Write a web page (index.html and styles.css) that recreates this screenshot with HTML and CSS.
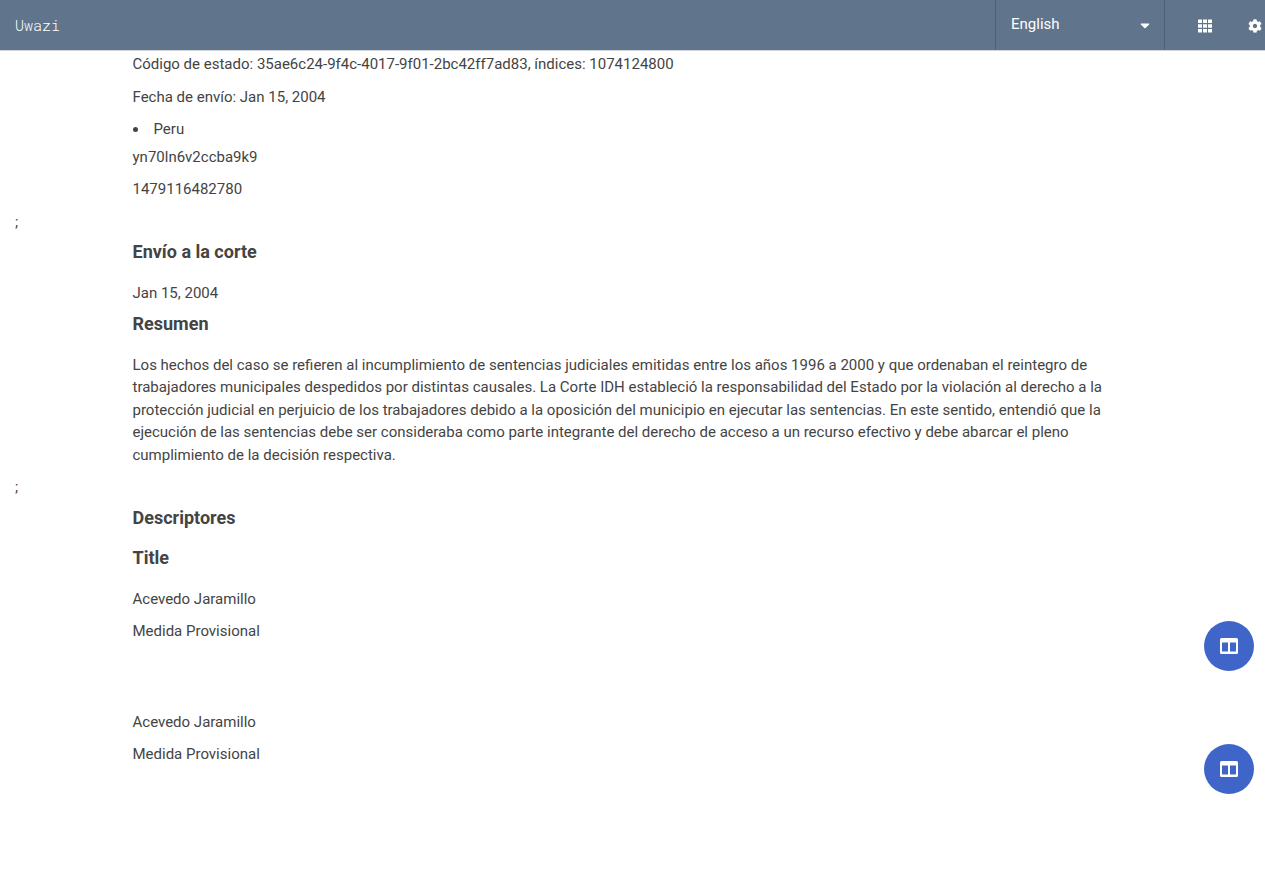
FILE: index.html
```html
<!DOCTYPE html>
<html lang="es">
<head>
<meta charset="utf-8">
<meta name="viewport" content="width=device-width, initial-scale=1">
<title>Uwazi</title>
<link rel="stylesheet" href="styles.css">
</head>
<body>
<header class="topbar">
  <a class="brand" href="#">Uwazi</a>
  <div class="language">
    <select class="language-select" aria-label="Language">
      <option>English</option>
      <option>Español</option>
    </select>
    <svg class="caret" viewBox="0 0 10 6" aria-hidden="true"><path d="M1.2 .5h7.6q1 .2.3 1L5.6 5q-.6.5-1.2 0L.9 1.500Q.2.700 1.200.500z"/></svg>
  </div>
  <nav class="menu">
    <a class="menu-link" href="#" aria-label="Library">
      <svg class="icon" viewBox="0 0 14 14" aria-hidden="true"><path d="M.5.5h3.500v3.500H0V1q0-.500.500-.500zM5 .5h4V4H5zM10 .5h3.500q.500 0 .500.500v3h-4zM0 5.200h4v3.600H0zM5 5.200h4v3.600H5zM10 5.200h4v3.600h-4zM0 10h4v3.500H.5Q0 13.500 0 13zM5 10h4v3.500H5zM10 10h4v3q0 .500-.500.500H10z"/></svg>
    </a>
    <a class="menu-link" href="#" aria-label="Settings">
      <svg class="icon" viewBox="0 0 512 512" aria-hidden="true"><path d="M487.400 315.700l-42.600-24.600c4.300-23.200 4.300-47 0-70.200l42.600-24.600c4.900-2.800 7.100-8.600 5.500-14-11.100-35.600-30-67.800-54.700-94.600-3.800-4.100-10-5.100-14.800-2.300L380.800 110c-17.900-15.400-38.500-27.300-60.800-35.100V25.800c0-5.600-3.900-10.500-9.400-11.700-36.700-8.200-74.300-7.800-109.200 0-5.500 1.200-9.400 6.100-9.400 11.700V75c-22.200 7.900-42.800 19.800-60.800 35.100L88.700 85.500c-4.900-2.800-11-1.900-14.800 2.300-24.700 26.700-43.600 58.900-54.700 94.600-1.700 5.400.6 11.200 5.500 14L67.300 221c-4.300 23.200-4.300 47 0 70.200l-42.600 24.600c-4.900 2.800-7.100 8.600-5.500 14 11.100 35.600 30 67.800 54.700 94.600 3.800 4.100 10 5.100 14.800 2.300l42.600-24.600c17.900 15.400 38.500 27.300 60.800 35.100v49.200c0 5.600 3.900 10.500 9.400 11.700 36.700 8.200 74.300 7.800 109.200 0 5.500-1.200 9.400-6.100 9.400-11.700v-49.200c22.200-7.900 42.800-19.800 60.800-35.100l42.600 24.600c4.900 2.800 11 1.900 14.800-2.300 24.700-26.700 43.600-58.900 54.700-94.600 1.500-5.500-.7-11.300-5.600-14.100zM256 336c-44.100 0-80-35.900-80-80s35.900-80 80-80 80 35.900 80 80-35.900 80-80 80z"/></svg>
    </a>
  </nav>
</header>
<main class="page">
  <section class="container">
    <p>Código de estado: 35ae6c24-9f4c-4017-9f01-2bc42ff7ad83, índices: 1074124800</p>
    <p>Fecha de envío: Jan 15, 2004</p>
    <ul class="countries"><li>Peru</li></ul>
    <p>yn70ln6v2ccba9k9</p>
    <p>1479116482780</p>
  </section>
  <div class="separator">;</div>
  <section class="container">
    <h4>Envío a la corte</h4>
    <div class="value">Jan 15, 2004</div>
    <h4>Resumen</h4>
    <p>Los hechos del caso se refieren al incumplimiento de sentencias judiciales emitidas entre los años 1996 a 2000 y que ordenaban el reintegro de trabajadores municipales despedidos por distintas causales. La Corte IDH estableció la responsabilidad del Estado por la violación al derecho a la protección judicial en perjuicio de los trabajadores debido a la oposición del municipio en ejecutar las sentencias. En este sentido, entendió que la ejecución de las sentencias debe ser consideraba como parte integrante del derecho de acceso a un recurso efectivo y debe abarcar el pleno cumplimiento de la decisión respectiva.</p>
  </section>
  <div class="separator">;</div>
  <section class="container">
    <h4>Descriptores</h4>
    <h4>Title</h4>
  </section>
  <article class="entity">
    <div class="entity-text">
      <p>Acevedo Jaramillo</p>
      <p>Medida Provisional</p>
    </div>
    <button class="panel-button" type="button" aria-label="Open panel">
      <svg class="panel-icon" viewBox="0 0 18 16" aria-hidden="true"><path fill-rule="evenodd" d="M1.500 0h15Q18 0 18 1.500v13q0 1.500-1.500 1.500h-15Q0 16 0 14.500v-13Q0 0 1.500 0zM2 4.500V13q0 .500.500.500H8v-9zM10 4.500v9h5.500q.500 0 .500-.500V4.500z"/></svg>
    </button>
  </article>
  <article class="entity">
    <div class="entity-text">
      <p>Acevedo Jaramillo</p>
      <p>Medida Provisional</p>
    </div>
    <button class="panel-button" type="button" aria-label="Open panel">
      <svg class="panel-icon" viewBox="0 0 18 16" aria-hidden="true"><path fill-rule="evenodd" d="M1.500 0h15Q18 0 18 1.500v13q0 1.500-1.500 1.500h-15Q0 16 0 14.500v-13Q0 0 1.500 0zM2 4.500V13q0 .500.500.500H8v-9zM10 4.500v9h5.500q.500 0 .500-.500V4.500z"/></svg>
    </button>
  </article>
</main>
</body>
</html>
```

FILE: styles.css
```css
* { box-sizing: border-box; }

body {
  margin: 0;
  background: #fff;
  color: #444;
  font-family: Roboto, "Liberation Sans", sans-serif;
  font-size: 15px;
  line-height: 1.5;
}

.topbar {
  display: flex;
  align-items: stretch;
  height: 51px;
  background: #60748b;
  border-bottom: 1px solid #d0d5dc;
}

.brand {
  flex: 1;
  padding: 14px 15px;
  color: #fff;
  font-family: "Roboto Mono", "Liberation Mono", monospace;
  font-weight: 300;
  text-decoration: none;
}

.language {
  display: grid;
  width: 170px;
  border: solid #505f72;
  border-width: 0 1px;
}

.language-select {
  grid-area: 1 / 1;
  appearance: none;
  width: 100%;
  padding: 0 15px 2px;
  border: 0;
  background: transparent;
  color: #fff;
  font: inherit;
}

.language-select option { color: #444; }

.caret {
  grid-area: 1 / 1;
  place-self: center end;
  width: 10px;
  height: 6px;
  margin-right: 14px;
  margin-top: 2px;
  fill: #fff;
  pointer-events: none;
}

.menu {
  display: flex;
  align-items: center;
  gap: 36px;
  padding: 2px 3px 0 33px;
}

.menu-link { display: flex; }

.icon {
  width: 14px;
  height: 14px;
  fill: #fff;
}

.page { padding: 2px 0 70px; }

.container {
  display: flow-root;
  max-width: 1000px;
  margin: 0 auto;
}

p { margin: 0 0 10px; }

h4 {
  margin: 20px 0;
  font-size: 18px;
  font-weight: 700;
  line-height: 20px;
}

.separator { padding: 0 15px; }

.separator + .container h4:first-child,
.value + h4 { margin-top: 9px; }

.countries {
  margin: 0 0 5px;
  padding: 0;
  list-style: disc inside;
}

.entity {
  display: grid;
  grid-template-columns: 1fr minmax(0, 1000px) 1fr;
  margin-bottom: 40px;
}

.entity-text {
  grid-column: 2;
  min-height: 83px;
}

.panel-button {
  grid-column: 3;
  place-self: end;
  display: flex;
  align-items: center;
  justify-content: center;
  width: 50px;
  height: 50px;
  margin-right: 11px;
  padding: 0;
  border: 0;
  border-radius: 50%;
  background: #3f65c8;
}

.panel-icon {
  width: 18px;
  height: 16px;
  fill: #fff;
}
```
